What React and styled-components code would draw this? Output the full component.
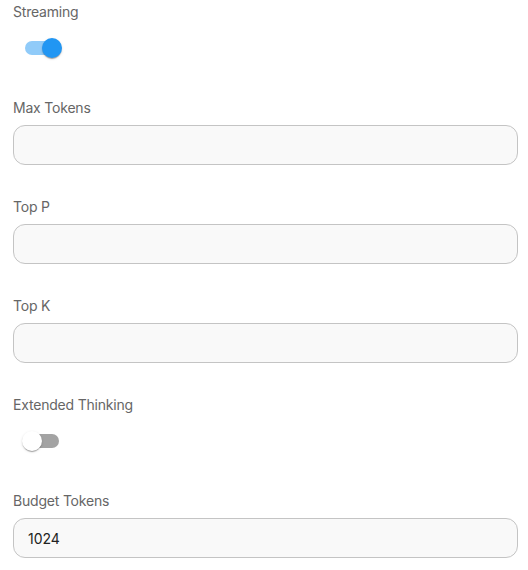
import { useState } from "react";
import styled, { createGlobalStyle } from "styled-components";

const GlobalStyle = createGlobalStyle`
  body {
    margin: 0;
    background: #fff;
    font-family: Inter, "Noto Sans", sans-serif;
  }
`;

const Panel = styled.div`
  padding: 2px 10px 0 13px;
  display: flex;
  flex-direction: column;
`;

const Field = styled.div`
  display: flex;
  flex-direction: column;
  gap: 7px;
  margin-bottom: ${(p) => (p.$toggle ? "31px" : "32px")};
`;

const Label = styled.label`
  font-size: 14px;
  line-height: 20px;
  color: #666;
  letter-spacing: -0.2px;
`;

const Input = styled.input`
  box-sizing: border-box;
  width: 100%;
  height: 40px;
  border: 1px solid #c4c4c4;
  border-radius: 12px;
  background: #f9f9f9;
  padding: 0 14px;
  font-family: inherit;
  font-size: 14px;
  color: #222;
  outline: none;
`;

const SwitchRoot = styled.button`
  all: unset;
  position: relative;
  width: 58px;
  height: 38px;
  cursor: pointer;
`;

const Track = styled.span`
  position: absolute;
  left: 12px;
  top: 12px;
  width: 34px;
  height: 14px;
  border-radius: 7px;
  background: ${(p) => (p.$on ? "#90cbf9" : "#a3a3a3")};
`;

const Thumb = styled.span`
  position: absolute;
  top: 9px;
  left: ${(p) => (p.$on ? "29px" : "9px")};
  width: 20px;
  height: 20px;
  border-radius: 50%;
  background: ${(p) => (p.$on ? "#2196f3" : "#fff")};
  box-shadow: 0 2px 1px -1px rgba(0, 0, 0, 0.2), 0 1px 1px 0 rgba(0, 0, 0, 0.14),
    0 1px 3px 0 rgba(0, 0, 0, 0.12);
`;

const Switch = ({ on, onToggle }) => (
  <SwitchRoot onClick={onToggle}>
    <Track $on={on} />
    <Thumb $on={on} />
  </SwitchRoot>
);

const App = () => {
  const [streaming, setStreaming] = useState(true);
  const [thinking, setThinking] = useState(false);

  return (
    <>
      <GlobalStyle />
      <Panel>
        <Field $toggle>
          <Label>Streaming</Label>
          <Switch on={streaming} onToggle={() => setStreaming(!streaming)} />
        </Field>
        <Field>
          <Label>Max Tokens</Label>
          <Input />
        </Field>
        <Field>
          <Label>Top P</Label>
          <Input />
        </Field>
        <Field>
          <Label>Top K</Label>
          <Input />
        </Field>
        <Field $toggle>
          <Label>Extended Thinking</Label>
          <Switch on={thinking} onToggle={() => setThinking(!thinking)} />
        </Field>
        <Field>
          <Label>Budget Tokens</Label>
          <Input defaultValue="1024" />
        </Field>
      </Panel>
    </>
  );
};

export default App;
